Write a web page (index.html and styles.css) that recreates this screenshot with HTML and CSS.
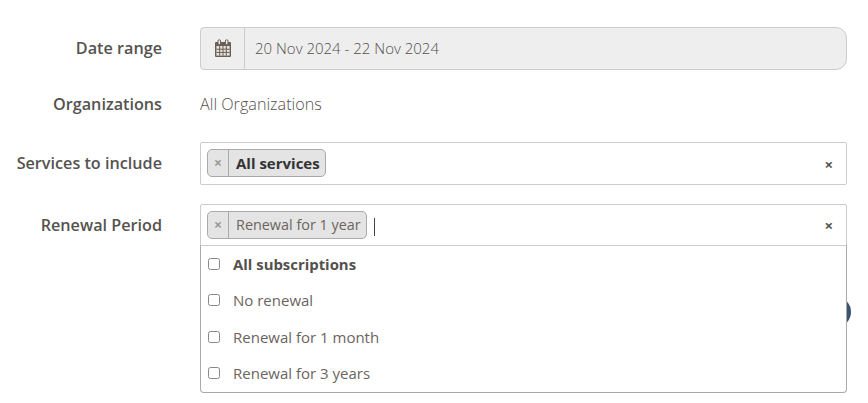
FILE: index.html
```html
<!DOCTYPE html>
<html lang="en">
<head>
    <meta charset="UTF-8">
    <title>Report filters</title>
    <link rel="stylesheet" href="styles.css">
</head>
<body>

<form class="filters">
    <span class="dark-dot"></span>

    <div class="row">
        <label class="row-label">Date range</label>
        <div class="date-box">
            <span class="date-addon">
                <svg width="18" height="19" viewBox="0 0 18 19" fill="none">
                    <rect x="1" y="3" width="16" height="15" rx="1" fill="#6b5f55" />
                    <rect x="2.4" y="7" width="13.2" height="9.6" fill="#e6e2de" />
                    <path d="M2.4 10.2h13.2M2.4 13.4h13.2M5.7 7v9.6M9 7v9.6M12.3 7v9.6" stroke="#6b5f55" stroke-width="1" />
                    <rect x="4" y="0.8" width="2.6" height="4.6" rx="1.2" fill="#eee" stroke="#6b5f55" />
                    <rect x="11.4" y="0.8" width="2.6" height="4.6" rx="1.2" fill="#eee" stroke="#6b5f55" />
                </svg>
            </span>
            <span class="date-value">20 Nov 2024 - 22 Nov 2024</span>
        </div>
    </div>

    <div class="row row-text">
        <label class="row-label">Organizations</label>
        <span class="plain-value">All Organizations</span>
    </div>

    <div class="row row-services">
        <label class="row-label">Services to include</label>
        <div class="select-box">
            <span class="tag tag-bold"><span class="tag-x">×</span><span class="tag-text">All services</span></span>
            <span class="clear-all">×</span>
        </div>
    </div>

    <div class="row">
        <label class="row-label">Renewal Period</label>
        <div class="select-wrap">
            <div class="select-box select-open">
                <span class="tag"><span class="tag-x">×</span><span class="tag-text">Renewal for 1 year</span></span>
                <span class="caret"></span>
                <span class="clear-all">×</span>
            </div>
            <ul class="dropdown">
                <li class="option option-bold"><span class="check"></span>All subscriptions</li>
                <li class="option"><span class="check"></span>No renewal</li>
                <li class="option"><span class="check"></span>Renewal for 1 month</li>
                <li class="option"><span class="check"></span>Renewal for 3 years</li>
            </ul>
        </div>
    </div>
</form>

</body>
</html>
```

FILE: styles.css
```css
html, body {
    height: 100%;
}
body {
    margin: 0;
    background: #fff;
    font-family: "Open Sans", sans-serif;
    color: #6b6460;
}
.filters {
    position: relative;
    width: 847px;
    height: 403px;
    box-sizing: border-box;
    padding-top: 27px;
}
.dark-dot {
    position: absolute;
    left: 826px;
    top: 298px;
    width: 25px;
    height: 28px;
    border-radius: 50%;
    background: #3a5570;
}
.row {
    display: flex;
    align-items: flex-start;
    margin-bottom: 20px;
}
.row-text {
    align-items: center;
    height: 28px;
    margin-bottom: 24px;
}
.row-services {
    margin-bottom: 19px;
}
.row-label {
    width: 162px;
    margin-right: 38px;
    flex-shrink: 0;
    text-align: right;
    font-size: 16.2px;
    font-weight: 600;
    line-height: 43px;
    color: #55534f;
}
.row-text .row-label {
    line-height: 28px;
}
.date-box {
    flex: 1;
    display: flex;
    height: 43px;
    box-sizing: border-box;
    background: #eee;
    border: 1px solid #ccc;
    border-radius: 4px 11px 11px 4px;
}
.date-addon {
    width: 44px;
    flex-shrink: 0;
    box-sizing: border-box;
    border-right: 1px solid #ccc;
    display: flex;
    align-items: center;
    justify-content: center;
}
.date-value {
    padding-left: 10px;
    font-size: 15px;
    font-weight: 300;
    line-height: 41px;
    color: #55504c;
}
.plain-value {
    font-size: 16.2px;
    font-weight: 300;
    color: #55504c;
}
.select-wrap {
    flex: 1;
    position: relative;
}
.select-box {
    flex: 1;
    display: flex;
    align-items: center;
    height: 43px;
    box-sizing: border-box;
    padding: 0 6px;
    background: #fff;
    border: 1px solid #ccc;
    border-radius: 2px;
}
.select-open {
    height: 42px;
    border-radius: 2px 2px 0 0;
}
.tag {
    display: flex;
    align-items: stretch;
    height: 28px;
    box-sizing: border-box;
    background: #e4e4e4;
    border: 1px solid #aaa;
    border-radius: 5px;
    font-size: 14.4px;
    line-height: 26px;
    color: #6b6460;
}
.tag-bold {
    margin-top: -1px;
}
.tag-x {
    width: 20px;
    text-align: center;
    border-right: 1px solid #aaa;
    font-size: 14px;
    font-weight: 700;
    color: #999;
}
.tag-text {
    padding: 0 5px 0 7px;
}
.tag-bold .tag-text {
    font-size: 15px;
    font-weight: 700;
    color: #333;
}
.caret {
    width: 1px;
    height: 18px;
    margin: 4px 0 0 7px;
    background: #444;
}
.clear-all {
    margin-left: auto;
    margin-right: 7px;
    font-size: 15px;
    font-weight: 700;
    color: #555;
}
.dropdown {
    position: absolute;
    left: 0;
    right: 0;
    top: 41px;
    margin: 0;
    padding: 0;
    list-style: none;
    height: 148px;
    box-sizing: border-box;
    background: #fff;
    border: 1px solid #aaa;
    border-top: 1px solid #ccc;
    border-radius: 0 0 4px 4px;
}
.option {
    display: flex;
    align-items: center;
    height: 36.3px;
    padding-left: 7px;
    font-size: 15px;
    color: #6b6460;
}
.option-bold {
    font-weight: 700;
    font-size: 14.9px;
    color: #55504c;
}
.check {
    width: 10px;
    height: 10px;
    margin-right: 13px;
    border: 1px solid #888;
    border-radius: 2.5px;
    flex-shrink: 0;
}
```
